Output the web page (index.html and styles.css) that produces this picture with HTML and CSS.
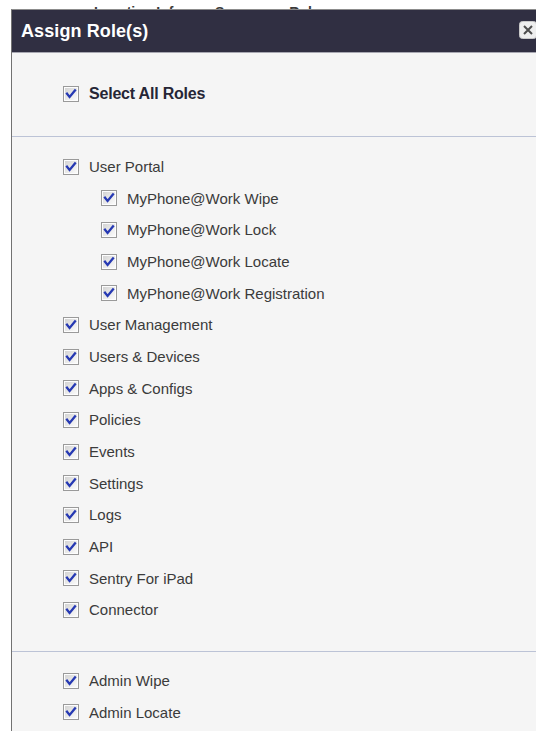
FILE: index.html
```html
<!DOCTYPE html>
<html lang="en">
<head>
<meta charset="utf-8">
<title>Assign Role(s)</title>
<link rel="stylesheet" href="styles.css">
</head>
<body>
<svg class="defs" width="0" height="0" aria-hidden="true">
  <defs>
    <linearGradient id="cbFill" x1="0" y1="0" x2="1" y2="1">
      <stop offset="0" stop-color="#d4d4d4"/>
      <stop offset="1" stop-color="#fbfbfb"/>
    </linearGradient>
    <symbol id="chk" viewBox="0 0 16 16">
      <rect x="0.5" y="0.5" width="15" height="15" fill="#fdfdfd" stroke="#9a9a9a"/>
      <rect x="2" y="2" width="12" height="12" fill="url(#cbFill)"/>
      <path d="M4 7.6 L6.6 11 L12 4.4" fill="none" stroke="#2639b3" stroke-width="2.3" stroke-linecap="square" stroke-linejoin="miter"/>
    </symbol>
  </defs>
</svg>

<div class="backdrop">
  <div class="columns">
    <span class="col col-location">Location Info</span>
    <span class="col col-source">Source</span>
    <span class="col col-roles">Roles</span>
  </div>
</div>

<div class="dialog">
  <div class="dialog-head">
    <span class="dialog-title">Assign Role(s)</span>
    <button class="close" type="button" aria-label="Close">
      <svg width="18" height="18" viewBox="0 0 18 18">
        <rect x="0.5" y="0.5" width="17" height="17" rx="3" fill="#eeeeee" stroke="#c9c9c9"/>
        <path d="M5 5 L13 13 M13 5 L5 13" stroke="#4d4d4d" stroke-width="2"/>
      </svg>
    </button>
  </div>

  <div class="dialog-body">
    <div class="section section-all">
      <label class="row row-all"><svg class="cb"><use href="#chk"/></svg><span>Select All Roles</span></label>
    </div>

    <div class="section section-main">
      <label class="row"><svg class="cb"><use href="#chk"/></svg><span>User Portal</span></label>
      <label class="row sub"><svg class="cb"><use href="#chk"/></svg><span>MyPhone@Work Wipe</span></label>
      <label class="row sub"><svg class="cb"><use href="#chk"/></svg><span>MyPhone@Work Lock</span></label>
      <label class="row sub"><svg class="cb"><use href="#chk"/></svg><span>MyPhone@Work Locate</span></label>
      <label class="row sub"><svg class="cb"><use href="#chk"/></svg><span>MyPhone@Work Registration</span></label>
      <label class="row"><svg class="cb"><use href="#chk"/></svg><span>User Management</span></label>
      <label class="row"><svg class="cb"><use href="#chk"/></svg><span>Users &amp; Devices</span></label>
      <label class="row"><svg class="cb"><use href="#chk"/></svg><span>Apps &amp; Configs</span></label>
      <label class="row"><svg class="cb"><use href="#chk"/></svg><span>Policies</span></label>
      <label class="row"><svg class="cb"><use href="#chk"/></svg><span>Events</span></label>
      <label class="row"><svg class="cb"><use href="#chk"/></svg><span>Settings</span></label>
      <label class="row"><svg class="cb"><use href="#chk"/></svg><span>Logs</span></label>
      <label class="row"><svg class="cb"><use href="#chk"/></svg><span>API</span></label>
      <label class="row"><svg class="cb"><use href="#chk"/></svg><span>Sentry For iPad</span></label>
      <label class="row"><svg class="cb"><use href="#chk"/></svg><span>Connector</span></label>
    </div>

    <div class="section section-admin">
      <label class="row"><svg class="cb"><use href="#chk"/></svg><span>Admin Wipe</span></label>
      <label class="row"><svg class="cb"><use href="#chk"/></svg><span>Admin Locate</span></label>
    </div>
  </div>
</div>
</body>
</html>
```

FILE: styles.css
```css
html, body {
  margin: 0;
  padding: 0;
  height: 100%;
  overflow: hidden;
  background: #ffffff;
  font-family: "Liberation Sans", Arial, sans-serif;
}

.defs {
  position: absolute;
  width: 0;
  height: 0;
  overflow: hidden;
}

/* page header behind the dialog; the dialog covers all but its top edge */
.backdrop {
  height: 9px;
  overflow: hidden;
}

.columns {
  display: flex;
  margin-top: 5px;
  padding-left: 94px;
  font-size: 14px;
  line-height: 14px;
  font-weight: bold;
  color: #3a3a3a;
  white-space: nowrap;
}

.col-location { margin-right: 33px; }
.col-source { margin-right: 27px; }

/* dialog */
.dialog {
  margin-left: 11px;
  height: calc(100% - 9px);
  border-left: 1px solid #727272;
  border-top: 1px solid #8c8c8c;
  background: #f5f5f5;
  box-sizing: border-box;
}

.dialog-head {
  height: 42px;
  display: flex;
  align-items: center;
  justify-content: space-between;
  padding-left: 9px;
  background: #302f42;
  border-bottom: 1px solid #a8a8b2;
}

.dialog-title {
  color: #ffffff;
  font-size: 18px;
  font-weight: bold;
  letter-spacing: 0.1px;
}

.close {
  width: 18px;
  height: 18px;
  margin: 0 -1px 3px 0;
  padding: 0;
  border: 0;
  background: none;
  display: block;
}

.close svg { display: block; }

.section {
  border-bottom: 1px solid #bcc3d6;
}

.section-all { padding: 25.5px 0; }
.section-main { padding: 14px 0 25px; }
.section-admin { padding: 13px 0; border-bottom: 0; }

.row {
  display: flex;
  align-items: center;
  height: 31.68px;
  padding-left: 51px;
  font-size: 15px;
  color: #3b3b3b;
  white-space: nowrap;
}

.row.sub { padding-left: 89px; }

.row-all {
  font-size: 16px;
  font-weight: bold;
  letter-spacing: -0.2px;
  color: #262636;
}

.cb {
  width: 16px;
  height: 16px;
  flex: none;
  margin-right: 10px;
}
```
